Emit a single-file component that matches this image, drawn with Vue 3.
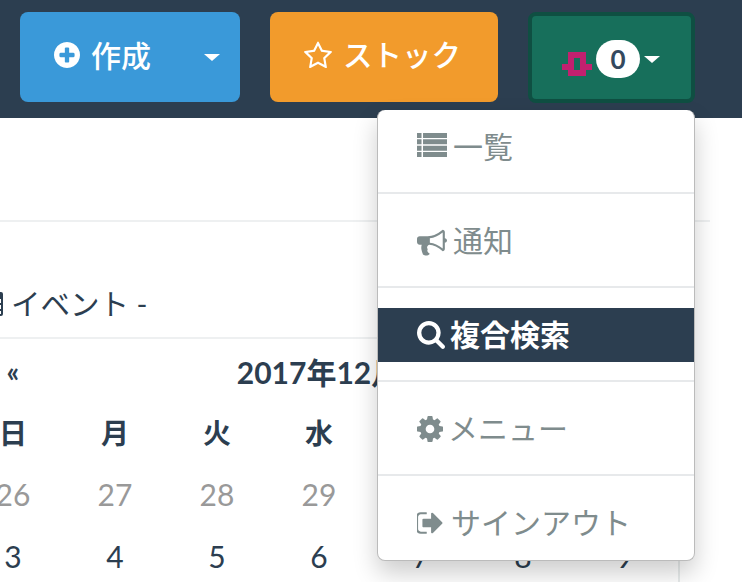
<script setup>
const P = {
  plus: 'M1344 960v-128q0-26-19-45t-45-19h-256v-256q0-26-19-45t-45-19h-128q-26 0-45 19t-19 45v256h-256q-26 0-45 19t-19 45v128q0 26 19 45t45 19h256v256q0 26 19 45t45 19h128q26 0 45-19t19-45v-256h256q26 0 45-19t19-45zm320-64q0 209-103 385.5t-279.5 279.5-385.5 103-385.5-103-279.5-279.5-103-385.5 103-385.5 279.5-279.5 385.5-103 385.5 103 279.5 279.5 103 385.5z',
  star: 'M1201 1004l306-297-422-62-189-382-189 382-422 62 306 297-73 421 378-199 377 199zm527-357q0 22-26 48l-363 354 86 500q1 7 1 20 0 50-41 50-19 0-40-12l-449-236-449 236q-22 12-40 12-21 0-31.5-14.5t-10.5-35.5q0-6 2-20l86-500-364-354q-25-27-25-48 0-37 56-46l502-73 225-455q19-41 49-41t49 41l225 455 502 73q56 9 56 46z',
  list: 'M0 60h270v300H0zM360 60h1432v300H360zM0 438h270v300H0zM360 438h1432v300H360zM0 816h270v300H0zM360 816h1432v300H360zM0 1194h270v300H0zM360 1194h1432v300H360z',
  horn: 'M1664 736q53 0 90.5 37.5t37.5 90.5-37.5 90.5-90.5 37.5v384q0 52-38 90t-90 38q-417-347-812-380-58 19-91 66t-31 100.5 40 92.5q-20 33-23 65.5t6 58 33.5 55 48 50 61.5 50.5q-29 58-111.5 83t-168.5 11.5-132-55.5q-7-23-29.5-87.5t-32-94.5-23-89-15-101 3.5-98.5 22-110.5h-122q-66 0-113-47t-47-113v-192q0-66 47-113t113-47h480q435 0 896-384 52 0 90 38t38 90v384zm-128 604v-954q-394 302-768 343v270q377 42 768 341z',
  search: 'M1216 832q0-185-131.5-316.5t-316.5-131.5-316.5 131.5-131.5 316.5 131.5 316.5 316.5 131.5 316.5-131.5 131.5-316.5zm512 832q0 52-38 90t-90 38q-54 0-90-38l-343-342q-179 124-399 124-143 0-273.5-55.5t-225-150-150-225-55.5-273.5 55.5-273.5 150-225 225-150 273.5-55.5 273.5 55.5 225 150 150 225 55.5 273.5q0 220-124 399l343 343q37 37 37 90z',
  cog: 'M1152 896q0-106-75-181t-181-75-181 75-75 181 75 181 181 75 181-75 75-181zm512-109v222q0 12-8 23t-20 13l-185 28q-19 54-39 91 35 50 107 138 10 12 10 25t-9 23q-27 37-99 108t-94 71q-12 0-26-9l-138-108q-44 23-91 38-16 136-29 186-7 28-36 28h-222q-14 0-24.5-8.5t-11.5-21.5l-28-184q-49-16-90-37l-141 107q-10 9-25 9-14 0-25-11-126-114-165-168-7-10-7-23 0-12 8-23 15-21 51-66.5t54-70.5q-27-50-41-99l-183-27q-13-2-21-12.5t-8-23.5v-222q0-12 8-23t19-13l186-28q14-46 39-92-40-57-107-138-10-12-10-24 0-10 9-23 26-36 98.5-107.5t94.5-71.5q13 0 26 10l138 107q44-23 91-38 16-136 29-186 7-28 36-28h222q14 0 24.5 8.5t11.5 21.5l28 184q49 16 90 37l142-107q9-9 24-9 13 0 25 10 129 119 165 170 7 8 7 22 0 12-8 23-15 21-51 66.5t-54 70.5q26 50 41 98l183 28q13 2 21 12.5t8 23.5z',
  out: 'M704 1440q0 4 1 20t.5 26.5-3 23.5-10 19.5-20.5 6.5h-320q-119 0-203.5-84.5t-84.5-203.5v-704q0-119 84.5-203.5t203.5-84.5h320q13 0 22.5 9.5t9.5 22.5q0 4 1 20t.5 26.5-3 23.5-10 19.5-20.5 6.5h-320q-66 0-113 47t-47 113v704q0 66 47 113t113 47h312l11.5 1 11.5 3 8 5.5 7 9 2 13.5zm928-544q0 26-19 45l-544 544q-19 19-45 19t-45-19-19-45v-288h-448q-26 0-45-19t-19-45v-384q0-26 19-45t45-19h448v-288q0-26 19-45t45-19 45 19l544 544q19 19 19 45z'
}
const menu = [
  { icon: P.list, label: '一覧', box: '0 0 1792 1792', size: 30, gap: 6 },
  { icon: P.horn, label: '通知', box: '0 0 1792 1792', size: 30, gap: 6 },
  { icon: P.search, label: '複合検索', box: '64 128 1664 1664', size: 28, gap: 5, active: true },
  { icon: P.cog, label: 'メニュー', box: '128 128 1536 1536', size: 26, gap: 5 },
  { icon: P.out, label: 'サインアウト', box: '128 128 1536 1536', size: 26, gap: 8 }
]
const week = ['日', '月', '火', '水', '木', '金', '土']
const rows = [
  [26, 27, 28, 29, 30, 1, 2].map((d, i) => ({ d, muted: i < 5 })),
  [3, 4, 5, 6, 7, 8, 9].map(d => ({ d, muted: false }))
]
</script>

<template>
  <div class="page">
    <header class="bar">
      <button class="btn create">
        <svg class="ico" viewBox="128 128 1536 1536"><path :d="P.plus" /></svg>
        <span class="btn-text">作成</span>
        <i class="caret push"></i>
      </button>
      <button class="btn stock">
        <svg class="ico star" viewBox="0 0 1792 1792"><path :d="P.star" /></svg>
        <span class="btn-text">ストック</span>
      </button>
      <button class="btn status">
        <svg class="pin" width="30" height="24" viewBox="0 0 30 24"><path d="M6 0h18v12h6v6h-6v6H6v-6H0v-6h6zM12 6v12h6V6z" fill-rule="evenodd" /></svg>
        <span class="badge">0</span>
        <i class="caret"></i>
      </button>
    </header>

    <main class="body">
      <div class="top-rule"></div>
      <section class="panel">
        <div class="panel-title">
          <svg class="cal" viewBox="0 0 26 26"><path d="M3 1h20a2 2 0 0 1 2 2v20a2 2 0 0 1-2 2H3a2 2 0 0 1-2-2V3a2 2 0 0 1 2-2zM3 8v4h20V8zM3 14v4h20v-4zM3 20v3h20v-3z" fill-rule="evenodd" /></svg>
          <span>イベント -</span>
        </div>
        <div class="cal-grid">
          <div class="nav-cell prev">«</div>
          <div class="nav-cell month">2017年12月</div>
          <div class="nav-cell"></div>
          <div v-for="w in week" :key="w" class="week">{{ w }}</div>
          <template v-for="(r, i) in rows" :key="i">
            <div v-for="c in r" :key="c.d" class="day" :class="{ muted: c.muted }">{{ c.d }}</div>
          </template>
        </div>
      </section>
    </main>

    <ul class="menu">
      <template v-for="(m, i) in menu" :key="m.label">
        <li v-if="i > 0" class="divider"></li>
        <li class="item" :class="{ active: m.active }">
          <svg class="mico" :viewBox="m.box" :width="m.size" :height="m.size"><path :d="m.icon" /></svg>
          <span :style="{ marginLeft: m.gap + 'px' }">{{ m.label }}</span>
        </li>
      </template>
    </ul>
  </div>
</template>

<style>
html, body { margin: 0; background: #fff; overflow: hidden; }
</style>

<style scoped>
.page {
  position: relative;
  width: 742px;
  height: 582px;
  overflow: hidden;
  background: #fff;
  color: #2c3e50;
  font-family: Lato, "Noto Sans CJK JP", sans-serif;
}
.bar {
  display: flex;
  align-items: flex-start;
  box-sizing: border-box;
  height: 118px;
  padding: 12px 0 0 20px;
  background: #2c3e50;
}
.btn {
  display: flex;
  align-items: center;
  box-sizing: border-box;
  height: 90px;
  border: 0;
  border-radius: 8px;
  padding: 0;
  color: #fff;
  font: inherit;
}
.create { width: 220px; padding: 0 20px 4px 34px; background: #3a99d9; }
.stock { width: 228px; margin-left: 30px; padding: 0 0 4px 33px; background: #f29b2c; }
.status {
  width: 167px;
  height: 91px;
  margin-left: 30px;
  padding: 0 0 0 30px;
  background: #176f5b;
  border: 4px solid #0f4f42;
}
.ico { width: 26px; height: 26px; fill: #fff; flex: none; }
.star { width: 30px; height: 30px; margin-top: 2px; }
.create .caret { margin-top: 4px; }
.btn-text { margin-left: 11px; font-size: 30px; font-weight: 500; line-height: 1; }
.star + .btn-text { margin-left: 10px; font-size: 29.5px; }
.caret {
  width: 0;
  height: 0;
  border-left: 8px solid transparent;
  border-right: 8px solid transparent;
  border-top: 7px solid #fff;
}
.push { margin-left: auto; }
.pin { fill: #c2206f; margin-top: 13px; flex: none; }
.badge {
  box-sizing: border-box;
  width: 44px;
  height: 38px;
  margin: 3px 0 0 4px;
  border-radius: 19px;
  background: #fff;
  color: #34495e;
  font-size: 26px;
  font-weight: 700;
  line-height: 38px;
  text-align: center;
}
.status .caret { margin: 4px 0 0 4px; }
.top-rule { width: 710px; height: 2px; margin-top: 102px; background: #eef0f1; }
.panel {
  box-sizing: border-box;
  width: 680px;
  height: 360px;
  border-right: 2px solid #e8ecec;
}
.panel-title {
  display: flex;
  align-items: center;
  box-sizing: border-box;
  height: 117px;
  padding: 45px 0 0 0;
  border-bottom: 2px solid #eef0f1;
  font-size: 29.5px;
}
.panel-title span { margin-left: 7px; white-space: nowrap; }
.cal { width: 26px; height: 26px; margin: 4px 0 0 -22px; fill: #2c3e50; flex: none; }
.cal-grid {
  display: grid;
  grid-template-columns: repeat(7, 102px);
  grid-auto-rows: 62px;
  grid-template-rows: 63px;
  margin: -1px 0 0 -38px;
  font-size: 30px;
  text-align: center;
}
.cal-grid > div { display: flex; align-items: center; justify-content: center; }
.nav-cell { padding-top: 3px; font-weight: 700; }
.prev { font-size: 28px; }
.month { grid-column: span 5; font-size: 30px; }
.week { font-size: 28px; font-weight: 700; }
.muted { color: #999; }
.menu {
  position: absolute;
  left: 377px;
  top: 110px;
  box-sizing: border-box;
  width: 318px;
  height: 451px;
  margin: 0;
  padding: 10px 0 0;
  list-style: none;
  background: #fff;
  border: 1px solid #bbb;
  border-top: 0;
  border-radius: 8px;
  box-shadow: 0 12px 24px rgba(0, 0, 0, 0.2);
  color: #7f8c8d;
}
.item {
  display: flex;
  align-items: center;
  height: 54px;
  padding-left: 39px;
  font-size: 30px;
  line-height: 54px;
}
.item span { margin-top: -3px; }
.active { background: #2c3e50; color: #fff; font-weight: 700; }
.mico { flex: none; fill: currentColor; }
.divider { height: 2px; margin: 18px 0 20px; background: #e7e9eb; }
</style>
